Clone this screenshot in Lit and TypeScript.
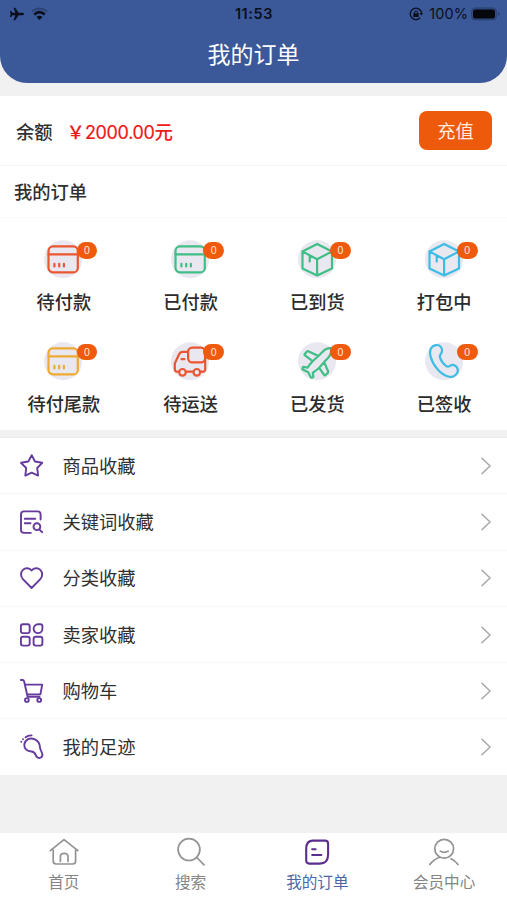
import { LitElement, html, css, svg } from "lit";
import { customElement, property } from "lit/decorators.js";

const card = svg`
  <rect x="5.7" y="7.4" width="29.3" height="26" rx="4.5"></rect>
  <path d="M5.7 15.4H35M11.6 24.8v2.6M16.4 24.8v2.6M21.1 24.8v2.6"></path>`;

const box = svg`
  <path d="M20.3 4.9 35.2 12.4V29.6L20.3 36.6 5.7 29.6V12.4ZM5.7 12.4 20.3 20.3 35.2 12.4M20.3 20.3V36.6M12.9 16.6V22.6"></path>`;

const truck = svg`
  <path d="M9.2 30.6H7Q5 30.6 5 28.6V22.5L9.3 13.2Q10.4 10.9 12.8 10.9H18.3M16 30.6H23.6M30.4 30.6H33.4Q35.4 30.6 35.4 28.6V18M11.8 18.2H14.6"></path>
  <rect x="18.3" y="6.6" width="17" height="14.8" rx="4.2"></rect>
  <circle cx="12.7" cy="31.3" r="3.3"></circle>
  <circle cx="27" cy="31.3" r="3.3"></circle>`;

const plane = svg`
  <path d="M34.4 7.2Q29.2 7 25.6 10.9L21.6 15 11.5 10.3Q10.7 9.9 10 10.7L8 12.9Q7.2 13.8 8.2 14.4L15.8 20.2Q12 24.5 10.7 26.7L6.4 25.9Q5.5 26.8 5.6 28.2L11.4 31.2 14.3 36.7Q15.8 37 16.6 35.9L16 31.8Q18.8 30 22.4 26.8L27.3 33.8Q28 34.8 28.8 34L31 31.9Q31.7 31.2 31.3 30.2L27.3 21.1 31.4 16.8Q35 12.8 34.4 7.2ZM15.8 20.2 21.6 15M22.4 26.8 27.3 21.1"></path>`;

const phone = svg`
  <path d="M12 4.1C16.4 3.4 19 7.2 18.1 10.8 17.5 13.3 15 13.7 16.3 16.8 17.6 20.4 20.3 23.6 22.8 25.3 25.4 26.8 26.3 23.5 29.3 23.9 32.8 24.4 35 28.2 33.7 31.4 32.4 34.9 28.3 36.6 24.3 35.5 17.3 33.6 9.4 25.2 6.9 16 5 9 7.3 4.9 12 4.1Z"></path>`;

const orders = [
  { label: "待付款", tone: "red", icon: card },
  { label: "已付款", tone: "green", icon: card },
  { label: "已到货", tone: "green", icon: box },
  { label: "打包中", tone: "sky", icon: box },
  { label: "待付尾款", tone: "amber", icon: card },
  { label: "待运送", tone: "red", icon: truck },
  { label: "已发货", tone: "green", icon: plane },
  { label: "已签收", tone: "sky", icon: phone },
];

const links = [
  {
    label: "商品收藏",
    icon: svg`<path d="M13.7 3.2 17 9.5 24.2 10.8 19.2 16 20.1 23.6 13.7 20.7 7.3 23.6 8.2 16 3 10.8 10.3 9.5Z"></path>`,
  },
  {
    label: "关键词收藏",
    icon: svg`<path d="M12.8 24.9H6Q3 24.9 3 21.9V6.4Q3 3.4 6 3.4H19.6Q22.6 3.4 22.6 6.4V11.5M6.8 10.8H17.3M6.8 15.2H12.5M21.2 21.4 24.2 24.2"></path><circle cx="18.9" cy="18.7" r="3.4"></circle>`,
  },
  {
    label: "分类收藏",
    icon: svg`<path d="M13.6 24 4.9 15.2C2.4 12.6 2.5 8.3 4.9 5.9 7.3 3.5 11.3 3.6 13.6 6.5 15.9 3.6 19.9 3.5 22.3 5.9 24.7 8.3 24.8 12.6 22.3 15.2Z"></path>`,
  },
  {
    label: "卖家收藏",
    icon: svg`<rect x="2.9" y="3.3" width="8.8" height="8.8" rx="2"></rect><rect x="2.9" y="15.8" width="8.8" height="8.8" rx="2"></rect><rect x="15.6" y="15.8" width="8.8" height="8.8" rx="2"></rect><path d="M20 3.3H22.4Q24.4 3.3 24.4 5.3V7.7A4.4 4.4 0 1 1 20 3.3Z"></path>`,
  },
  {
    label: "购物车",
    icon: svg`<path d="M2.8 3H4.6Q5.8 3 6.1 4.2L9.6 19.8H21.5M6.9 7.6H24.2L22.4 17.4H9"></path><circle cx="8.9" cy="23" r="1.9"></circle><circle cx="21.2" cy="23" r="1.9"></circle>`,
  },
  {
    label: "我的足迹",
    icon: svg`<path d="M16.7 6.3C11.8 3.9 6.6 7 6.3 11.7 6.1 15.6 9.2 18.2 13.3 18.5 16.4 18.7 16.9 19.8 17.6 21.9 18.4 24.5 20.8 25.8 22.8 24.5 24.7 23.3 24.6 21 23.6 19.1 22.5 16.9 21.9 15.7 21.7 12.7 21.5 9.7 19.5 7.6 16.7 6.3ZM7.6 4.3Q10.3 2.2 13.6 2.4"></path><path d="M3.3 8.6V8.7M5 6.2V6.3"></path>`,
  },
];

const tabs = [
  {
    label: "首页",
    active: false,
    icon: svg`<path d="M2.3 14.6 16 3.6 29.9 14.6M5.2 14.2V25Q5.2 28 8.2 28H24.6Q27.6 28 27.6 25V14.2M12.4 25.4V20.4Q12.4 17.3 16.2 17.3T20 20.4V25.4"></path>`,
  },
  {
    label: "搜索",
    active: false,
    icon: svg`<circle cx="14" cy="13.6" r="10.9"></circle><path d="M21.8 21.5 29 28.8"></path>`,
  },
  {
    label: "我的订单",
    active: true,
    icon: svg`<path d="M12 4.6H24Q27.1 4.6 27.1 7.7V18.5C27.1 24.5 24.4 27.6 18.8 27.6H8.3Q5.2 27.6 5.2 24.5V12.8C5.2 7.4 7.5 4.6 12 4.6ZM11.2 13.2H14.6M11.2 19H20.3"></path>`,
  },
  {
    label: "会员中心",
    active: false,
    icon: svg`<circle cx="16.2" cy="12.8" r="9.4"></circle><path d="M12.2 15.1Q16.2 17.7 20.2 15.1M1.8 28.6Q5.8 23.1 11.8 21.2M23 22.7Q27 24.5 30 28.4"></path>`,
  },
];

@customElement("status-bar")
class StatusBar extends LitElement {
  static styles = css`
    :host {
      display: grid;
      grid-template-columns: 1fr auto 1fr;
      align-items: center;
      height: 28px;
      padding: 0 7px 0 9px;
      color: #0b0f1c;
      font: 15px/28px Inter, "Liberation Sans", sans-serif;
    }
    .side { display: flex; align-items: center; }
    .left { gap: 6px; }
    .right { justify-content: flex-end; }
    .time { font-weight: 600; font-size: 14.5px; letter-spacing: 0.6px; margin-right: 1px; }
    .percent { margin: 0 3px 0 6px; font-size: 14.5px; letter-spacing: 0.1px; }
    svg { display: block; }
    .wifi { width: 17px; }
  `;
  render() {
    return html`
      <div class="side left">
        <svg width="16" height="14" viewBox="0 0 16 14">
          <path fill="#0b0f1c" d="M15 7Q15 5.7 13.2 5.7H9.6L6.2.8H4.6L6.3 5.7H3.4L2.1 4.1H.9L1.6 7 .9 9.9H2.1L3.4 8.3H6.3L4.6 13.2H6.2L9.6 8.3H13.2Q15 8.3 15 7Z"></path>
        </svg>
        <svg class="wifi" width="17" height="14" viewBox="0 0 17 14" fill="none">
          <path stroke="#2c4375" stroke-width="1.8" d="M.8 4.5Q8.5-1.5 16.2 4.5"></path>
          <path stroke="#0b0f1c" stroke-width="2.6" d="M3.2 7.4Q8.5 3 13.8 7.4"></path>
          <path fill="#0b0f1c" d="M5.5 9.9Q8.5 7.7 11.5 9.9L8.5 13Z"></path>
        </svg>
      </div>
      <span class="time">11:53</span>
      <div class="side right">
        <svg width="14" height="14" viewBox="0 0 14 14" fill="none" stroke="#0b0f1c">
          <path stroke-width="1.3" d="M12.6 5.8A5.7 5.7 0 1 0 11.2 10.8"></path>
          <path fill="#0b0f1c" stroke="none" d="M10.4 5.9H14L12.5 8.6ZM4.3 6.3H9.7V10H4.3Z"></path>
          <path d="M5.5 6.5V5.3Q5.5 4 7 4T8.5 5.3V6.5"></path>
        </svg>
        <span class="percent">100%</span>
        <svg width="29" height="14" viewBox="0 0 29 14">
          <rect x=".5" y=".9" width="25" height="12" rx="3.6" fill="#304a83" stroke="#2c4375"></rect>
          <rect x="2" y="2.4" width="22" height="9" rx="2.2" fill="#05070d"></rect>
          <path fill="#2c4375" d="M26.9 5Q28.7 5.6 28.7 7T26.9 9Z"></path>
        </svg>
      </div>
    `;
  }
}

@customElement("order-cell")
class OrderCell extends LitElement {
  @property({ attribute: false }) order: any;
  static styles = css`
    :host { display: flex; flex-direction: column; align-items: center; height: 101.7px; }
    .icon { position: relative; width: 40px; height: 40px; }
    svg { display: block; fill: none; stroke: currentColor; stroke-width: 2.2; stroke-linecap: round; stroke-linejoin: round; }
    .disc { fill: #e9e7ef; stroke: none; }
    .red { color: #ea5630; }
    .green { color: #3fbf86; }
    .sky { color: #3dbde4; }
    .amber { color: #eeaa33; }
    .badge {
      position: absolute; left: 33.3px; top: 3.3px; width: 20.6px; height: 16.5px;
      border-radius: 9px; background: #ef5a0c; color: #ffe9dc;
      font: 10.5px/16px "Liberation Sans", sans-serif; text-align: center;
    }
    .label { margin: 12px 0 0 1px; font-size: 18.2px; line-height: 24px; font-weight: 500; color: #2b2b2b; }
  `;
  render() {
    const { label, tone, icon } = this.order;
    return html`
      <div class="icon ${tone}">
        <svg width="40" height="40" viewBox="0.2 0 40 40"><circle class="disc" cx="20.3" cy="20.3" r="19"></circle>${icon}</svg>
        <span class="badge">0</span>
      </div>
      <span class="label">${label}</span>
    `;
  }
}

@customElement("app-root")
class AppRoot extends LitElement {
  static styles = css`
    :host {
      display: flex; flex-direction: column; height: 900px; overflow: hidden;
      background: #f1f1f1; color: #303030;
      font-family: "Liberation Sans", "Noto Sans CJK SC", sans-serif;
    }
    .header { height: 83px; border-radius: 0 0 27px 27px; background: #3b5998; flex: none; }
    .title { text-align: center; color: #fff; font-size: 23px; line-height: 30px; padding-top: 12px; }
    .panel { background: #fff; }
    .wallet { margin-top: 13px; }
    .balance { display: flex; align-items: center; box-sizing: border-box; height: 70px; padding: 0 15px 0 16px; border-bottom: 1px solid #f3f3f3; font-size: 18.3px; }
    .amount { margin-left: 14px; flex: 1; color: #f01818; font-weight: 500; font-size: 18.4px; white-space: nowrap; }
    .digits { font-family: Inter, "Liberation Sans", sans-serif; font-weight: 400; font-size: 18px; -webkit-text-stroke: 0.2px; letter-spacing: -0.35px; }
    .name { font-weight: 500; }
    .recharge { width: 73px; height: 39px; border-radius: 8px; background: #ee5a0b; color: #ffece0; text-align: center; line-height: 41px; }
    .section { box-sizing: border-box; height: 52px; padding-left: 14px; border-bottom: 1px solid #fafafa; font-size: 18.3px; font-weight: 500; line-height: 54px; }
    .orders { display: grid; grid-template-columns: repeat(4, 1fr); box-sizing: border-box; height: 212px; padding-top: 21px; align-content: start; }
    .links { margin-top: 8px; box-shadow: 0 -1px 0 #ebebeb; }
    .link { display: flex; align-items: center; box-sizing: border-box; height: 56.3px; padding: 0 16px 0 18px; border-bottom: 1.5px solid #f6f6f6; font-size: 18.3px; }
    .link:last-child { border-bottom: 0; height: 55.8px; }
    .link svg { display: block; fill: none; stroke-linejoin: round; stroke-linecap: round; }
    .glyph { stroke: #653b9d; stroke-width: 1.9; }
    .text { flex: 1; margin: 0 0 2px 16.5px; }
    .chevron { stroke: #a5a5a5; stroke-width: 1.4; }
    .tabs { display: grid; grid-template-columns: repeat(4, 1fr); height: 67px; margin-top: auto; background: #fff; }
    .tab { display: flex; flex-direction: column; align-items: center; color: #858585; font-size: 15.6px; line-height: 22px; padding: 3px 0 0 1px; }
    .tab svg { display: block; fill: none; stroke: #939393; stroke-width: 1.7; stroke-linecap: round; stroke-linejoin: round; margin-bottom: 4px; }
    .tab.active { color: #4a67a8; }
    .tab.active svg { stroke: #5a2d8e; stroke-width: 2.1; }
  `;
  render() {
    return html`
      <header class="header">
        <status-bar></status-bar>
        <div class="title">我的订单</div>
      </header>
      <section class="panel wallet">
        <div class="balance">
          <span class="name">余额</span>
          <span class="amount">￥<span class="digits">2000.00</span>元</span>
          <span class="recharge">充值</span>
        </div>
        <div class="section">我的订单</div>
        <div class="orders">${orders.map((o) => html`<order-cell .order=${o}></order-cell>`)}</div>
      </section>
      <section class="panel links">
        ${links.map(
          (l) => html`<div class="link">
            <svg class="glyph" width="28" height="28" viewBox="0 0 28 28">${l.icon}</svg>
            <span class="text">${l.label}</span>
            <svg class="chevron" width="10" height="18" viewBox="0 0 10 18"><path d="M.9 1.2 9.1 9 .9 16.8"></path></svg>
          </div>`
        )}
      </section>
      <nav class="tabs">
        ${tabs.map(
          (t) => html`<div class="tab ${t.active ? "active" : ""}">
            <svg width="32" height="32" viewBox="0 0 32 32">${t.icon}</svg>
            <span>${t.label}</span>
          </div>`
        )}
      </nav>
    `;
  }
}
